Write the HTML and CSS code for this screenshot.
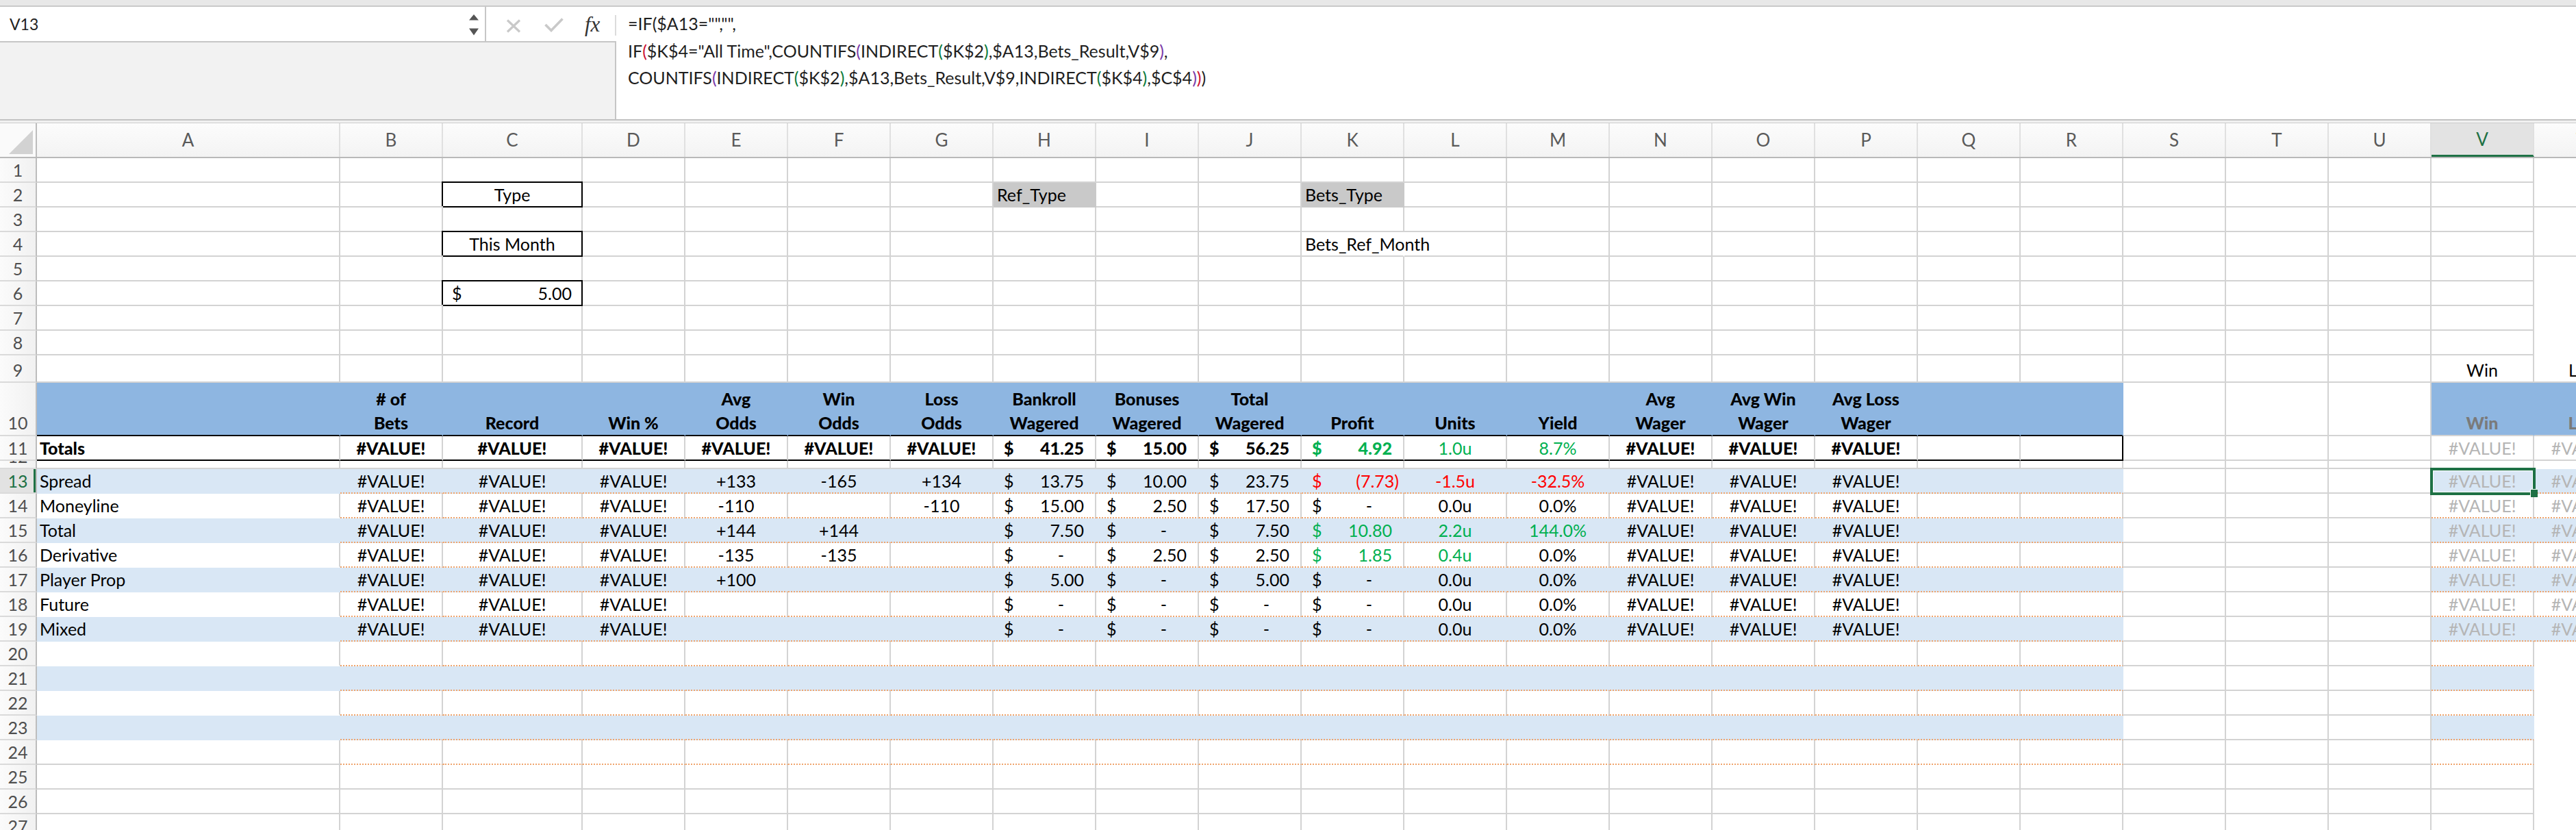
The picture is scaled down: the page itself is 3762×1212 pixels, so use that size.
FILE: index.html
```html
<!DOCTYPE html>
<html lang="en">
<head>
<meta charset="utf-8">
<title>Bets Summary</title>
<link rel="stylesheet" href="styles.css">
</head>
<body>
<div class="app">
  <div class="topstrip"></div>
  <div class="fbar">
    <div class="fleft">
      <div class="ftop">
        <div class="namebox"><span class="nbtext">V13</span><svg class="spin" width="14" height="31" viewBox="0 0 14 31"><polygon points="0,8.5 7,0 14,8.5" fill="#555"/><polygon points="0,20.5 14,20.5 7,30.5" fill="#555"/></svg></div>
        <div class="ficons">
          <svg class="ic-x" width="22" height="20" viewBox="0 0 22 20"><path d="M2 1.5 L20 18.5 M20 1.5 L2 18.5" stroke="#c9c9c9" stroke-width="3.2" fill="none"/></svg>
          <svg class="ic-ok" width="28" height="21" viewBox="0 0 28 21"><path d="M1.5 10 L10 18.5 L26.5 1.5" stroke="#c9c9c9" stroke-width="3.6" fill="none"/></svg>
          <span class="ic-fx">fx</span>
          <span class="fsep"></span>
        </div>
      </div>
      <div class="fpad"></div>
    </div>
    <div class="formula">
      <div>=IF($A13="","",</div>
      <div>IF<span class="p1">(</span>$K$4="All Time",COUNTIFS<span class="p2">(</span>INDIRECT<span class="p3">(</span>$K$2<span class="p3">)</span>,$A13,Bets_Result,V$9<span class="p2">)</span>,</div>
      <div>COUNTIFS<span class="p2">(</span>INDIRECT<span class="p3">(</span>$K$2<span class="p3">)</span>,$A13,Bets_Result,V$9,INDIRECT<span class="p3">(</span>$K$4<span class="p3">)</span>,$C$4<span class="p2">)</span><span class="p1">)</span>)</div>
    </div>
  </div>
  <div class="gap"></div>
  <div class="colhdr">
    <div class="corner"><svg width="52" height="49" viewBox="0 0 52 49"><polygon points="48,10 48,45 13,45" fill="#d2d2d2"/></svg></div>
    <div>A</div><div>B</div><div>C</div><div>D</div><div>E</div><div>F</div><div>G</div><div>H</div><div>I</div><div>J</div><div>K</div><div>L</div><div>M</div><div>N</div><div>O</div><div>P</div><div>Q</div><div>R</div><div>S</div><div>T</div><div>U</div><div class="sel">V</div><div>W</div>
  </div>
  <div class="sheet">
    <div class="r"><div class="rh">1</div><div></div><div></div><div></div><div></div><div></div><div></div><div></div><div></div><div></div><div></div><div></div><div></div><div></div><div></div><div></div><div></div><div></div><div></div><div></div><div></div><div></div><div></div></div>
    <div class="r"><div class="rh">2</div><div></div><div></div><div class="box c">Type</div><div></div><div></div><div></div><div></div><div class="fill">Ref_Type</div><div></div><div></div><div class="fill">Bets_Type</div><div></div><div></div><div></div><div></div><div></div><div></div><div></div><div></div><div></div><div></div><div></div><div></div></div>
    <div class="r"><div class="rh">3</div><div></div><div></div><div></div><div></div><div></div><div></div><div></div><div></div><div></div><div></div><div></div><div></div><div></div><div></div><div></div><div></div><div></div><div></div><div></div><div></div><div></div><div></div></div>
    <div class="r"><div class="rh">4</div><div></div><div></div><div class="box c">This Month</div><div></div><div></div><div></div><div></div><div></div><div></div><div></div><div class="ov">Bets_Ref_Month</div><div></div><div></div><div></div><div></div><div></div><div></div><div></div><div></div><div></div><div></div><div></div><div></div></div>
    <div class="r"><div class="rh">5</div><div></div><div></div><div></div><div></div><div></div><div></div><div></div><div></div><div></div><div></div><div></div><div></div><div></div><div></div><div></div><div></div><div></div><div></div><div></div><div></div><div></div><div></div></div>
    <div class="r"><div class="rh">6</div><div></div><div></div><div class="box acc"><span>$</span><span>5.00</span></div><div></div><div></div><div></div><div></div><div></div><div></div><div></div><div></div><div></div><div></div><div></div><div></div><div></div><div></div><div></div><div></div><div></div><div></div><div></div></div>
    <div class="r"><div class="rh">7</div><div></div><div></div><div></div><div></div><div></div><div></div><div></div><div></div><div></div><div></div><div></div><div></div><div></div><div></div><div></div><div></div><div></div><div></div><div></div><div></div><div></div><div></div></div>
    <div class="r"><div class="rh">8</div><div></div><div></div><div></div><div></div><div></div><div></div><div></div><div></div><div></div><div></div><div></div><div></div><div></div><div></div><div></div><div></div><div></div><div></div><div></div><div></div><div></div><div></div></div>
    <div class="r h40"><div class="rh">9</div>
      <div></div><div></div><div></div><div></div><div></div><div></div><div></div>
      <div></div><div></div><div></div><div></div><div></div><div></div><div></div>
      <div></div><div></div><div></div><div></div><div></div><div></div><div></div>
      <div class="c">Win</div><div class="c">Loss</div></div>
    <div class="r h78 hdr"><div class="rh">10</div><div></div><div class="c"><span># of<br>Bets</span></div><div class="c"><span>Record</span></div><div class="c"><span>Win %</span></div><div class="c"><span>Avg<br>Odds</span></div><div class="c"><span>Win<br>Odds</span></div><div class="c"><span>Loss<br>Odds</span></div><div class="c"><span>Bankroll<br>Wagered</span></div><div class="c"><span>Bonuses<br>Wagered</span></div><div class="c"><span>Total<br>Wagered</span></div><div class="c"><span>Profit</span></div><div class="c"><span>Units</span></div><div class="c"><span>Yield</span></div><div class="c"><span>Avg<br>Wager</span></div><div class="c"><span>Avg Win<br>Wager</span></div><div class="c"><span>Avg Loss<br>Wager</span></div><div></div><div></div><div></div><div></div><div></div><div class="c dg">Win</div><div class="c dg">Loss</div></div>
    <div class="r tot"><div class="rh">11</div><div class="b">Totals</div><div class="c b">#VALUE!</div><div class="c b">#VALUE!</div><div class="c b">#VALUE!</div><div class="c b">#VALUE!</div><div class="c b">#VALUE!</div><div class="c b">#VALUE!</div><div class="acc b"><span>$</span><span>41.25</span></div><div class="acc b"><span>$</span><span>15.00</span></div><div class="acc b"><span>$</span><span>56.25</span></div><div class="acc g b"><span>$</span><span>4.92</span></div><div class="c g">1.0u</div><div class="c g">8.7%</div><div class="c b">#VALUE!</div><div class="c b">#VALUE!</div><div class="c b">#VALUE!</div><div></div><div></div><div></div><div></div><div></div><div class="c lg">#VALUE!</div><div class="c lg">#VALUE!</div></div>
    <div class="r h12"><div class="rh">12</div><div></div><div></div><div></div><div></div><div></div><div></div><div></div><div></div><div></div><div></div><div></div><div></div><div></div><div></div><div></div><div></div><div></div><div></div><div></div><div></div><div></div><div></div></div>
    <div class="r zone band"><div class="rh sel">13</div><div>Spread</div><div class="c">#VALUE!</div><div class="c">#VALUE!</div><div class="c">#VALUE!</div><div class="c">+133</div><div class="c">-165</div><div class="c">+134</div><div class="acc"><span>$</span><span>13.75</span></div><div class="acc"><span>$</span><span>10.00</span></div><div class="acc"><span>$</span><span>23.75</span></div><div class="acc red neg"><span>$</span><span>(7.73)</span></div><div class="c red">-1.5u</div><div class="c red">-32.5%</div><div class="c">#VALUE!</div><div class="c">#VALUE!</div><div class="c">#VALUE!</div><div></div><div></div><div></div><div></div><div></div><div class="c lg cur">#VALUE!</div><div class="c lg">#VALUE!</div></div>
    <div class="r zone"><div class="rh">14</div><div>Moneyline</div><div class="c">#VALUE!</div><div class="c">#VALUE!</div><div class="c">#VALUE!</div><div class="c">-110</div><div></div><div class="c">-110</div><div class="acc"><span>$</span><span>15.00</span></div><div class="acc"><span>$</span><span>2.50</span></div><div class="acc"><span>$</span><span>17.50</span></div><div class="acc"><span>$</span><span class="z">-</span></div><div class="c">0.0u</div><div class="c">0.0%</div><div class="c">#VALUE!</div><div class="c">#VALUE!</div><div class="c">#VALUE!</div><div></div><div></div><div></div><div></div><div></div><div class="c lg">#VALUE!</div><div class="c lg">#VALUE!</div></div>
    <div class="r zone band"><div class="rh">15</div><div>Total</div><div class="c">#VALUE!</div><div class="c">#VALUE!</div><div class="c">#VALUE!</div><div class="c">+144</div><div class="c">+144</div><div></div><div class="acc"><span>$</span><span>7.50</span></div><div class="acc"><span>$</span><span class="z">-</span></div><div class="acc"><span>$</span><span>7.50</span></div><div class="acc g"><span>$</span><span>10.80</span></div><div class="c g">2.2u</div><div class="c g">144.0%</div><div class="c">#VALUE!</div><div class="c">#VALUE!</div><div class="c">#VALUE!</div><div></div><div></div><div></div><div></div><div></div><div class="c lg">#VALUE!</div><div class="c lg">#VALUE!</div></div>
    <div class="r zone"><div class="rh">16</div><div>Derivative</div><div class="c">#VALUE!</div><div class="c">#VALUE!</div><div class="c">#VALUE!</div><div class="c">-135</div><div class="c">-135</div><div></div><div class="acc"><span>$</span><span class="z">-</span></div><div class="acc"><span>$</span><span>2.50</span></div><div class="acc"><span>$</span><span>2.50</span></div><div class="acc g"><span>$</span><span>1.85</span></div><div class="c g">0.4u</div><div class="c">0.0%</div><div class="c">#VALUE!</div><div class="c">#VALUE!</div><div class="c">#VALUE!</div><div></div><div></div><div></div><div></div><div></div><div class="c lg">#VALUE!</div><div class="c lg">#VALUE!</div></div>
    <div class="r zone band"><div class="rh">17</div><div>Player Prop</div><div class="c">#VALUE!</div><div class="c">#VALUE!</div><div class="c">#VALUE!</div><div class="c">+100</div><div></div><div></div><div class="acc"><span>$</span><span>5.00</span></div><div class="acc"><span>$</span><span class="z">-</span></div><div class="acc"><span>$</span><span>5.00</span></div><div class="acc"><span>$</span><span class="z">-</span></div><div class="c">0.0u</div><div class="c">0.0%</div><div class="c">#VALUE!</div><div class="c">#VALUE!</div><div class="c">#VALUE!</div><div></div><div></div><div></div><div></div><div></div><div class="c lg">#VALUE!</div><div class="c lg">#VALUE!</div></div>
    <div class="r zone"><div class="rh">18</div><div>Future</div><div class="c">#VALUE!</div><div class="c">#VALUE!</div><div class="c">#VALUE!</div><div></div><div></div><div></div><div class="acc"><span>$</span><span class="z">-</span></div><div class="acc"><span>$</span><span class="z">-</span></div><div class="acc"><span>$</span><span class="z">-</span></div><div class="acc"><span>$</span><span class="z">-</span></div><div class="c">0.0u</div><div class="c">0.0%</div><div class="c">#VALUE!</div><div class="c">#VALUE!</div><div class="c">#VALUE!</div><div></div><div></div><div></div><div></div><div></div><div class="c lg">#VALUE!</div><div class="c lg">#VALUE!</div></div>
    <div class="r zone band"><div class="rh">19</div><div>Mixed</div><div class="c">#VALUE!</div><div class="c">#VALUE!</div><div class="c">#VALUE!</div><div></div><div></div><div></div><div class="acc"><span>$</span><span class="z">-</span></div><div class="acc"><span>$</span><span class="z">-</span></div><div class="acc"><span>$</span><span class="z">-</span></div><div class="acc"><span>$</span><span class="z">-</span></div><div class="c">0.0u</div><div class="c">0.0%</div><div class="c">#VALUE!</div><div class="c">#VALUE!</div><div class="c">#VALUE!</div><div></div><div></div><div></div><div></div><div></div><div class="c lg">#VALUE!</div><div class="c lg">#VALUE!</div></div>
    <div class="r zone"><div class="rh">20</div><div></div><div></div><div></div><div></div><div></div><div></div><div></div><div></div><div></div><div></div><div></div><div></div><div></div><div></div><div></div><div></div><div></div><div></div><div></div><div></div><div></div><div></div></div>
    <div class="r zone band"><div class="rh">21</div><div></div><div></div><div></div><div></div><div></div><div></div><div></div><div></div><div></div><div></div><div></div><div></div><div></div><div></div><div></div><div></div><div></div><div></div><div></div><div></div><div></div><div></div></div>
    <div class="r zone"><div class="rh">22</div><div></div><div></div><div></div><div></div><div></div><div></div><div></div><div></div><div></div><div></div><div></div><div></div><div></div><div></div><div></div><div></div><div></div><div></div><div></div><div></div><div></div><div></div></div>
    <div class="r zone band"><div class="rh">23</div><div></div><div></div><div></div><div></div><div></div><div></div><div></div><div></div><div></div><div></div><div></div><div></div><div></div><div></div><div></div><div></div><div></div><div></div><div></div><div></div><div></div><div></div></div>
    <div class="r zone last"><div class="rh">24</div><div></div><div></div><div></div><div></div><div></div><div></div><div></div><div></div><div></div><div></div><div></div><div></div><div></div><div></div><div></div><div></div><div></div><div></div><div></div><div></div><div></div><div></div></div>
    <div class="r"><div class="rh">25</div><div></div><div></div><div></div><div></div><div></div><div></div><div></div><div></div><div></div><div></div><div></div><div></div><div></div><div></div><div></div><div></div><div></div><div></div><div></div><div></div><div></div><div></div></div>
    <div class="r"><div class="rh">26</div><div></div><div></div><div></div><div></div><div></div><div></div><div></div><div></div><div></div><div></div><div></div><div></div><div></div><div></div><div></div><div></div><div></div><div></div><div></div><div></div><div></div><div></div></div>
    <div class="r"><div class="rh">27</div><div></div><div></div><div></div><div></div><div></div><div></div><div></div><div></div><div></div><div></div><div></div><div></div><div></div><div></div><div></div><div></div><div></div><div></div><div></div><div></div><div></div><div></div></div>
  </div>
</div>
</body>
</html>
```
FILE: styles.css
```css
:root {
  --grid: #d3d3d3;
  --band: #d9e7f5;
  --hb: #8eb6e1;
  --org: #f0a46c;
  --xl: #1e7145;
  --cols: 54px 443px 150px 204px repeat(20, 150px);
}

* { box-sizing: border-box; margin: 0; padding: 0; }

html, body {
  width: 3762px;
  height: 1212px;
  overflow: hidden;
  background: #fff;
}

body {
  font-family: Lato, "Liberation Sans", sans-serif;
  color: #000;
}

.app { width: 3762px; height: 1212px; overflow: hidden; }

/* ---------- formula bar ---------- */
.topstrip {
  height: 10px;
  background: #e8e8e8;
  border-bottom: 2px solid #c9c9c9;
}

.fbar {
  display: flex;
  height: 166px;
  border-bottom: 2px solid #c3c3c3;
}

.fleft {
  width: 900px;
  display: flex;
  flex-direction: column;
}

.ftop {
  height: 52px;
  display: flex;
  background: #fff;
  border-bottom: 2px solid #c6c6c6;
}

.namebox {
  width: 710px;
  display: flex;
  align-items: flex-start;
  justify-content: space-between;
  padding: 0 9px 0 14px;
  border-right: 2px solid #c6c6c6;
}

.nbtext {
  font-size: 23px;
  line-height: 50px;
  color: #222;
}

.spin { margin-top: 11px; }

.ficons {
  flex: 1;
  display: flex;
  align-items: flex-start;
  padding-left: 29px;
}

.ic-x { margin-top: 18px; }
.ic-ok { margin-top: 16px; margin-left: 34px; }

.ic-fx {
  margin-left: 31px;
  margin-top: 10px;
  font-family: "Liberation Serif", "DejaVu Serif", serif;
  font-style: italic;
  font-size: 31px;
  line-height: 32px;
  color: #333;
}

.fsep {
  margin-left: auto;
  margin-top: 12px;
  width: 2px;
  height: 30px;
  background: #dcdcdc;
}

.fpad {
  flex: 1;
  background: #f2f2f2;
  border-right: 2px solid #c6c6c6;
}

.formula {
  flex: 1;
  background: #fff;
  padding: 5px 0 0 17px;
  font-size: 25px;
  line-height: 39.5px;
  color: #1f1f1f;
  white-space: nowrap;
}

.p1 { color: #cc1133; }
.p2 { color: #7a3aa8; }
.p3 { color: #0b7a3a; }

.gap {
  height: 4px;
  background: #f1f1f1;
  border-bottom: 1px solid #cdcdcd;
}

/* ---------- column header ---------- */
.colhdr {
  display: grid;
  grid-template-columns: var(--cols);
  height: 51px;
  background: linear-gradient(#fcfcfc, #f3f3f3);
  border-bottom: 2px solid #b9b9b9;
}

.colhdr > div {
  border-right: 2px solid #e0e0e0;
  text-align: center;
  font-size: 26px;
  line-height: 49px;
  color: #5a5a5a;
}

.colhdr > .corner {
  border-right: 2px solid #bdbdbd;
  background: #fafafa;
}

.colhdr > .corner svg { display: block; }

.colhdr > .sel {
  background: #e3e3e3;
  color: var(--xl);
  border-bottom: 3px solid var(--xl);
  line-height: 46px;
}

/* ---------- sheet ---------- */
.r {
  display: grid;
  grid-template-columns: var(--cols);
  height: 36px;
  font-size: 25px;
}

.h40 { height: 40px; }
.h78 { height: 78px; }
.h12 { height: 12px; }

.r > div {
  display: flex;
  align-items: flex-end;
  padding: 0 4px;
  border-right: 2px solid var(--grid);
  border-bottom: 2px solid var(--grid);
  line-height: 34px;
  white-space: nowrap;
}

.r > .rh {
  justify-content: center;
  padding: 0;
  overflow: hidden;
  background: linear-gradient(90deg, #fbfbfb, #f1f1f1);
  border-right-color: #bdbdbd;
  border-bottom-color: #dadada;
  color: #4f4f4f;
}

.r > .rh.sel {
  background: #e2e2e2;
  color: var(--xl);
  box-shadow: inset -3px 0 0 var(--xl);
}

.h12 > div { overflow: hidden; }

.r > .c { justify-content: center; text-align: center; }

.r > .acc {
  justify-content: space-between;
  padding: 0 16px 0 15px;
}

.r > .acc.neg { padding-right: 6px; }
.z { margin-right: 29px; }

.b { font-weight: 900; }
.g { color: #00b050; }
.red { color: #ff0000; }
.lg { color: #b5b5b5; }
.r > .dg { color: #7a7a7a; font-weight: 900; }

.r > .fill {
  background: #c9c9c9;
  border-right-color: transparent;
  border-bottom-color: transparent;
  padding-left: 5px;
}

.r > .ov { border-right-color: transparent; padding-left: 5px; }

.r > .box {
  border-right-color: #000;
  border-bottom-color: #000;
  box-shadow: -2px -2px 0 #000, 0 -2px 0 #000;
}

.r > .box.acc { padding: 0 14px 0 13px; }

/* header band (row 10) */
.hdr > div { line-height: 35px; }
.hdr > :nth-child(n+2):nth-child(-n+19),
.hdr > :nth-child(n+23) {
  background: var(--hb);
  border-right-color: transparent;
}
.hdr > :nth-child(n+2):nth-child(-n+19) {
  border-bottom-color: #000;
  font-weight: 900;
}

/* totals row (row 11) */
.tot > :nth-child(n+2):nth-child(-n+19) { border-bottom-color: #000; }
.tot > :nth-child(19) { border-right-color: #000; }

/* banded data rows */
.band > :nth-child(n+2):nth-child(-n+19),
.band > :nth-child(n+23) {
  background: var(--band);
  border-right-color: transparent;
}

.zone > :nth-child(n+3):nth-child(-n+19),
.zone > :nth-child(n+23) {
  border-bottom: 2px dotted var(--org);
}

.zone > :nth-child(2) { border-bottom-color: transparent; }
.zone.last > :nth-child(2) { border-bottom-color: var(--grid); }

/* active cell */
.r > .cur { position: relative; }
.r > .cur::after {
  content: "";
  position: absolute;
  left: -2px;
  top: -2px;
  right: -4px;
  bottom: -4px;
  border: 4px solid var(--xl);
  box-shadow: inset 0 0 0 1px #fff;
  z-index: 2;
}
.r > .cur::before {
  content: "";
  position: absolute;
  right: -7px;
  bottom: -7px;
  width: 10px;
  height: 11px;
  background: var(--xl);
  border-left: 1px solid #fff;
  border-top: 1px solid #fff;
  z-index: 3;
}
```
